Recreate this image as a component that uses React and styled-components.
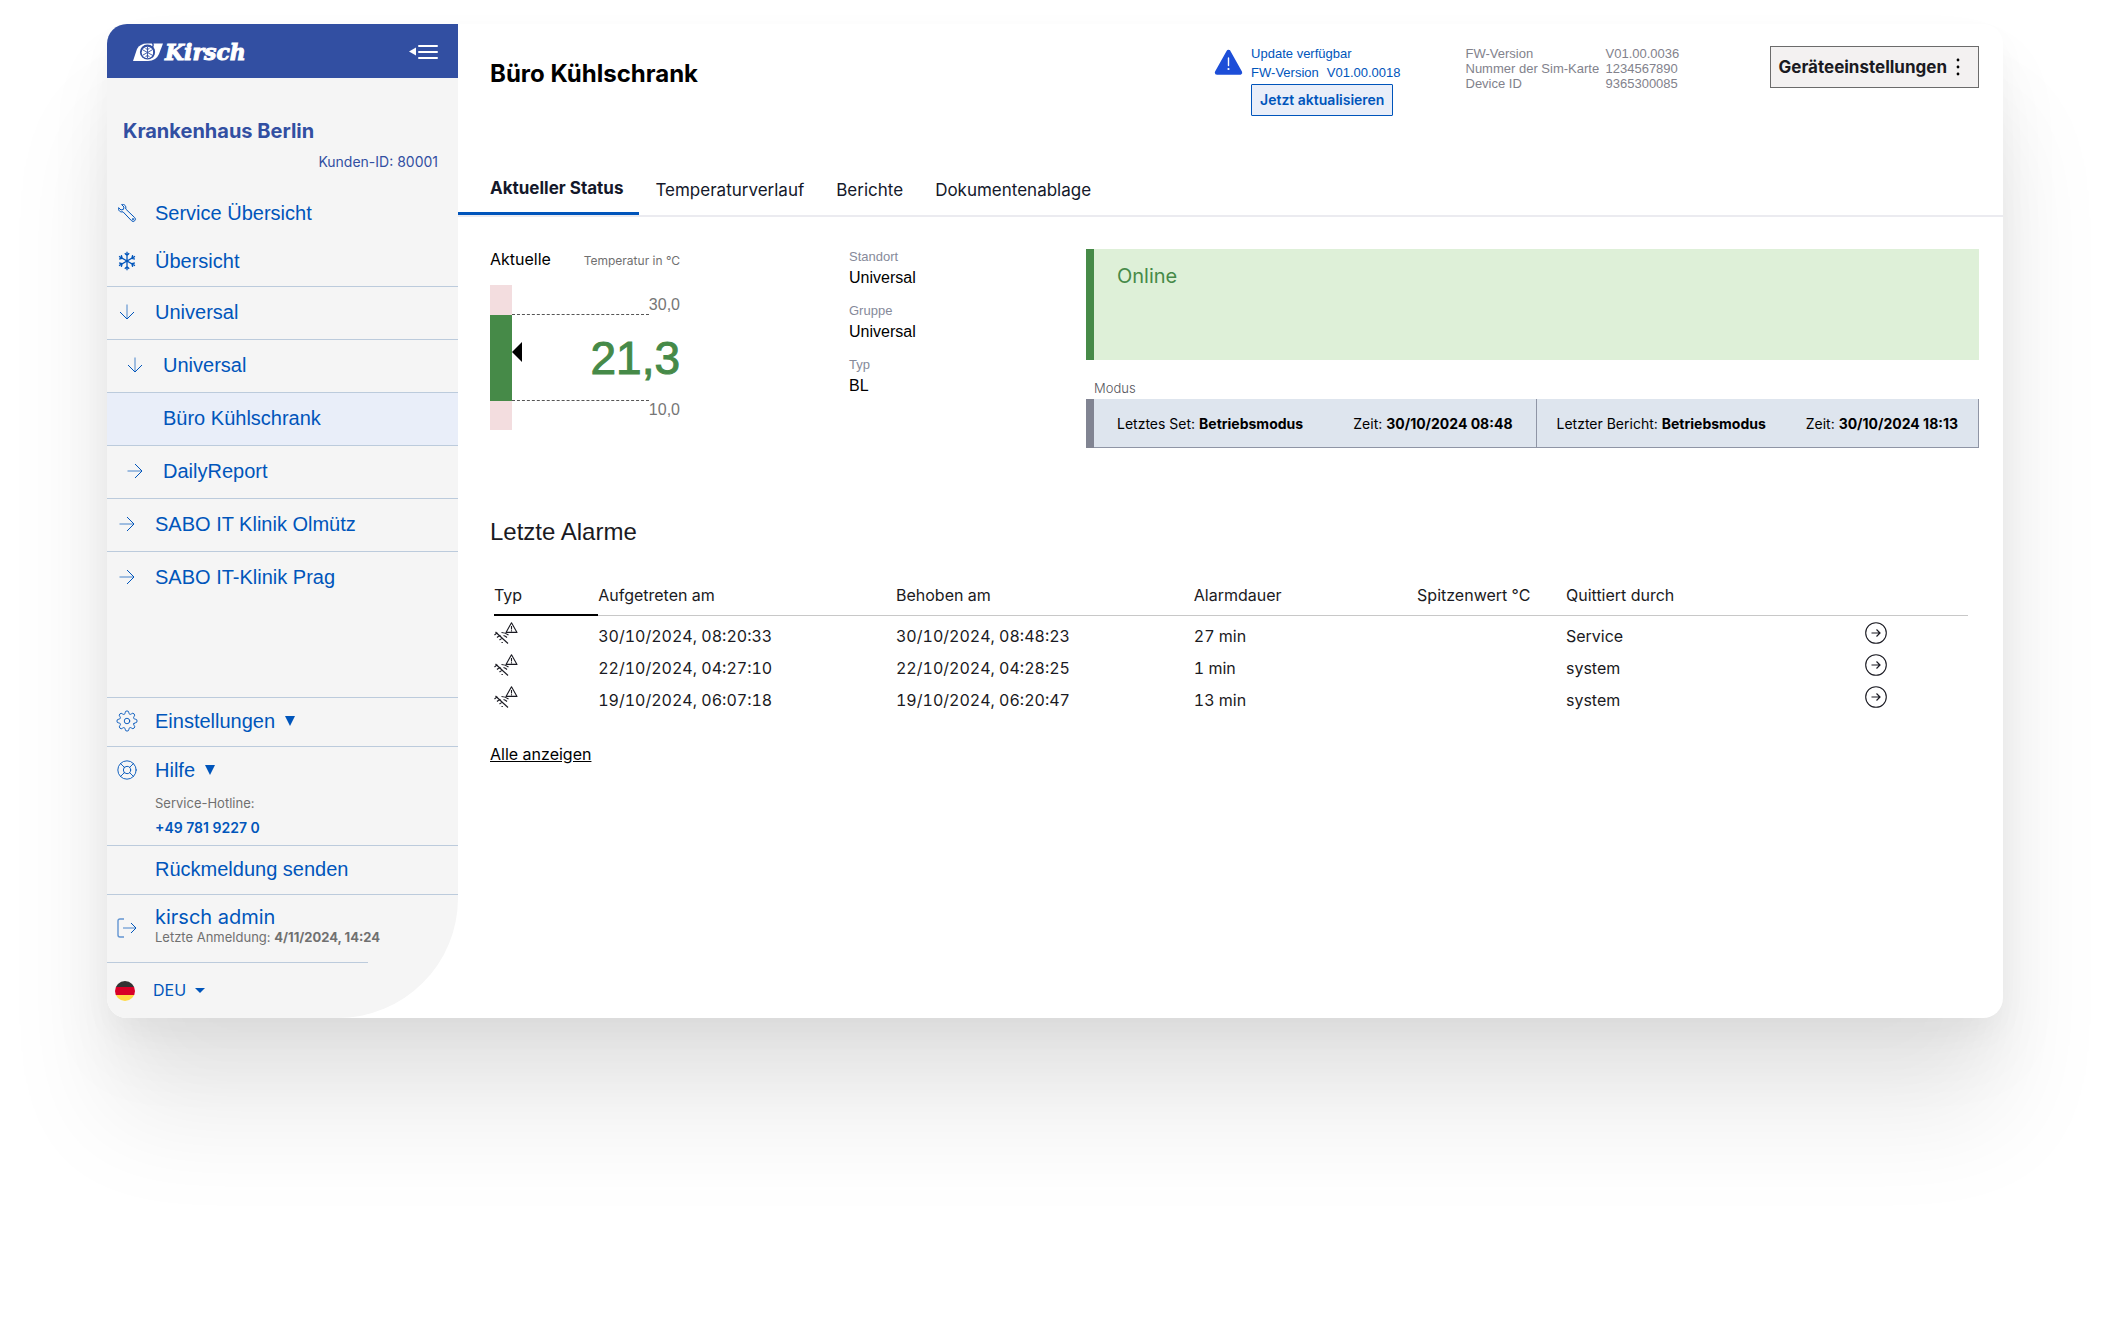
import React from 'react';
import styled, { createGlobalStyle } from 'styled-components';
import { LifeBuoy } from 'lucide-react';
import { FiSettings } from 'react-icons/fi';

const GlobalStyle = createGlobalStyle`
  *,
  *::before,
  *::after {
    box-sizing: border-box;
  }

  body {
    margin: 0;
    background-color: #FFFFFF;
    font-family: 'Inter', sans-serif;
    color: #1A1A22;
  }

  button,
  select {
    font: inherit;
    color: inherit;
    cursor: pointer;
  }
`;

const helvetica = `'Liberation Sans', Arial, sans-serif`;

const Page = styled.div`
  padding: 24px 107px 306px;
`;

const Window = styled.div`
  display: flex;
  background-color: #FFFFFF;
  border-radius: 20px;
  overflow: hidden;
  box-shadow:
    0 100px 110px rgba(0, 0, 0, 0.08),
    0 40px 70px rgba(0, 0, 0, 0.05),
    0 14px 30px rgba(0, 0, 0, 0.03);
`;

/* Sidebar */

const Sidebar = styled.aside`
  flex: 0 0 351px;
  background-color: #F5F5F5;
  border-bottom-right-radius: 120px;
  color: #0055BB;
`;

const SidebarHeader = styled.div`
  display: flex;
  align-items: center;
  justify-content: space-between;
  height: 54px;
  padding: 2px 20px 0 26px;
  background-color: #324FA2;
  color: #FFFFFF;
`;

const Logo = styled.a`
  display: flex;
  align-items: center;
  color: #FFFFFF;
  text-decoration: none;
`;

const LogoText = styled.span`
  font-family: 'DejaVu Serif', serif;
  font-size: 22px;
  line-height: 24px;
  font-weight: 700;
  font-style: italic;
  -webkit-text-stroke: 1px #FFFFFF;
`;

const IconButton = styled.button`
  display: flex;
  padding: 0;
  border: none;
  background: none;
`;

const Customer = styled.div`
  padding: 41px 20px 18px 16px;
  color: #324FA2;
`;

const CustomerName = styled.div`
  font-size: 20px;
  line-height: 24px;
  font-weight: 700;
`;

const CustomerId = styled.div`
  margin-top: 9px;
  font-size: 14px;
  line-height: 20px;
  text-align: right;
`;

const NavLink = styled.a`
  display: flex;
  align-items: center;
  gap: 18px;
  padding: ${props => (props.$tree ? '13px 10px 15px' : '11px 10px 13px')};
  padding-left: ${props => (props.$nested ? 18 : 10)}px;
  border-top: ${props => (props.$tree ? '1px solid #BCCBDC' : 'none')};
  background-color: ${props => (props.$active ? '#E9EEF9' : 'transparent')};
  font-family: ${helvetica};
  font-size: 20px;
  line-height: 24px;
  color: #0055BB;
  text-decoration: none;
`;

const IconSlot = styled.span`
  display: flex;
  justify-content: center;
  flex: 0 0 20px;
  min-width: 0;

  svg {
    flex-shrink: 0;
  }
`;

const SidebarFooter = styled.div`
  margin-top: 93px;
`;

const FooterBlock = styled.div`
  border-top: 1px solid #BCCBDC;
`;

const FooterButton = styled.button`
  display: flex;
  align-items: center;
  gap: 18px;
  width: 100%;
  padding: ${props => (props.$tight ? '11px 10px' : '11px 10px 13px')};
  border: none;
  background: none;
  font-family: ${helvetica};
  font-size: 20px;
  line-height: 24px;
  text-align: left;
`;

const ButtonLabel = styled.span`
  display: flex;
  align-items: center;
  gap: 10px;
`;

const Hotline = styled.div`
  padding: 0 10px 7px 48px;
  font-size: 13px;
  line-height: 20px;
  color: #707070;
`;

const HotlineNumber = styled.a`
  display: block;
  margin-top: 5px;
  font-size: 14px;
  font-weight: 600;
  color: #0055BB;
  text-decoration: none;
`;

const UserBlock = styled(FooterBlock)`
  display: flex;
  align-items: center;
  gap: 18px;
  padding: 10px 10px 17px;
`;

const LogoutButton = styled(IconButton)`
  padding-top: 6px;
`;

const UserName = styled.div`
  font-size: 20px;
  line-height: 24px;
`;

const LastLogin = styled.div`
  font-size: 13px;
  line-height: 16px;
  color: #707070;
`;

const LanguageBlock = styled(FooterBlock)`
  display: flex;
  align-items: center;
  width: 261px;
  height: 56px;
  padding: 0 8px;
`;

const LanguageSelect = styled.select`
  margin: 0 8px 0 18px;
  padding: 0 0 2px;
  border: none;
  background: none;
  appearance: none;
  font-size: 16px;
  line-height: 24px;
`;

/* Main */

const Main = styled.main`
  flex: 1;
  min-width: 0;
`;

const DeviceHeader = styled.header`
  display: flex;
  align-items: flex-start;
  min-height: 152px;
  padding: 20px 24px 0 32px;
`;

const DeviceTitle = styled.h1`
  flex: 1;
  margin: 14px 0 0;
  font-size: 24px;
  line-height: 32px;
  font-weight: 700;
  color: #000000;
`;

const UpdateNotice = styled.div`
  display: flex;
  gap: 8px;
  font-family: ${helvetica};
  font-size: 13px;
  line-height: 19px;
  color: #0055BB;

  svg {
    margin-top: 5px;
  }
`;

const UpdateVersion = styled.div`
  display: flex;
  gap: 8px;
`;

const UpdateButton = styled.button`
  margin-top: 2px;
  padding: 5px 8px;
  border: 1px solid #0055BB;
  border-radius: 1px;
  background-color: #E9EEF9;
  font-family: 'Inter', sans-serif;
  font-size: 14px;
  line-height: 20px;
  font-weight: 600;
`;

const DeviceInfo = styled.dl`
  display: grid;
  grid-template-columns: 140px 72px;
  margin: 2px 0 0 65px;
  font-family: ${helvetica};
  font-size: 13px;
  line-height: 15px;
  color: #82828C;

  dd {
    margin: 0;
  }
`;

const SettingsButton = styled.button`
  display: flex;
  align-items: center;
  gap: 7px;
  margin: 2px 0 0 92px;
  padding: 8px 16px 8px 8px;
  border: 1px solid #6B6B6B;
  background-color: #F3F1F1;
  font-size: 17px;
  line-height: 24px;
  font-weight: 700;
  white-space: nowrap;
`;

const Tabs = styled.nav`
  display: flex;
  align-items: flex-end;
  border-bottom: 2px solid #EBEBF0;
`;

const Tab = styled.a`
  padding: ${props => (props.$active ? '0 16px 12px 32px' : '0 16px 13px')};
  border-bottom: ${props => (props.$active ? '3px solid #0055BB' : 'none')};
  font-size: 17px;
  line-height: 24px;
  font-weight: ${props => (props.$active ? 700 : 400)};
  color: #14182A;
  text-decoration: none;
`;

const Status = styled.section`
  display: grid;
  grid-template-columns: 359px 237px 1fr;
  padding: 30px 24px 0 32px;
`;

const Temperature = styled.div`
  width: 190px;
`;

const TemperatureHead = styled.div`
  display: flex;
  align-items: baseline;
  justify-content: space-between;
  font-size: 16px;
  line-height: 24px;
  color: #000000;
`;

const Unit = styled.span`
  font-size: 12px;
  color: #707070;
`;

const Gauge = styled.div`
  position: relative;
  display: flex;
  margin-top: 12px;
`;

const GaugeBar = styled.div`
  flex: 0 0 22px;
  height: 145px;
  padding: 30px 0 29px;
  background-color: #F3DDDF;

  &::before {
    content: '';
    display: block;
    height: 86px;
    background-color: #468A48;
  }
`;

const Pointer = styled.svg`
  position: absolute;
  left: 22px;
  transform: translateY(-50%);
`;

const Scale = styled.div`
  flex: 1;
  display: grid;
  grid-template-rows: 30px 85px 30px;
`;

const Limit = styled.div`
  display: flex;
  align-items: ${props => (props.$upper ? 'flex-end' : 'flex-start')};
  font-family: ${helvetica};
  font-size: 16px;
  line-height: 20px;
  color: #767676;

  &::before {
    content: '';
    flex: 1;
    border-top: 1px dashed #555555;
  }
`;

const Reading = styled.div`
  align-self: center;
  font-family: ${helvetica};
  font-size: 46px;
  line-height: 56px;
  text-align: right;
  color: #468A48;
  -webkit-text-stroke: 1px #468A48;
`;

const Facts = styled.dl`
  margin: 1px 0 0;
  font-family: ${helvetica};

  dt {
    font-size: 13px;
    line-height: 18px;
    color: #868A9A;
  }

  dd {
    margin: 0 0 12px;
    font-size: 16px;
    line-height: 24px;
    color: #000000;
  }
`;

const StatePanel = styled.div`
  height: 111px;
  margin-top: 2px;
  padding: 15px 23px;
  border-left: 8px solid #468A48;
  background-color: #DEF0D8;
  font-size: 20px;
  line-height: 24px;
  color: #468A48;
`;

const ModeLabel = styled.div`
  margin: 19px 0 2px 8px;
  font-size: 13px;
  line-height: 18px;
  font-weight: 300;
  color: #55555C;
`;

const ModePanel = styled.div`
  display: flex;
  border-left: 8px solid #818492;
  background-color: #DEE5EE;
`;

const ModeCell = styled.div`
  flex: 1 1 50%;
  display: flex;
  flex-wrap: wrap;
  justify-content: space-between;
  padding: 15px ${props => (props.$first ? 23 : 20)}px 13px;
  border: solid #8F95A5;
  border-width: 0 1px 1px 0;
  font-size: 14px;
  line-height: 20px;
  color: #000000;
`;

const Alarms = styled.section`
  padding: 68px 24px 0 32px;
`;

const AlarmsTitle = styled.h2`
  margin: 0 0 35px;
  font-family: ${helvetica};
  font-size: 24px;
  line-height: 32px;
  font-weight: 400;
`;

const TableWrap = styled.div`
  padding: 0 11px 0 4px;
`;

const Table = styled.table`
  width: 100%;
  table-layout: fixed;
  border-spacing: 0;
  font-size: 16px;
  line-height: 24px;
  font-variant-numeric: tabular-nums;
  text-align: left;
`;

const HeadCell = styled.th`
  width: ${props => props.$width}%;
  padding: 0 0 7px;
  border-bottom: ${props => (props.$sorted ? '2px solid #000000' : '1px solid #C8C8C8')};
  font-weight: 400;
  vertical-align: top;
  white-space: nowrap;
`;

const Cell = styled.td`
  padding: 8px 0 0;
`;

const IconCell = styled.td`
  padding: 6px 0 4px;

  svg {
    display: block;
  }
`;

const ShowAll = styled.a`
  display: inline-block;
  margin-top: 30px;
  font-size: 16px;
  line-height: 24px;
  color: #000000;
`;

/* Icons */

const LogoMark = () => (
  <svg width="32" height="20" viewBox="0 0 32 20" aria-hidden="true">
    <path d="M0 19 L4 7 Q7 1.5 14 1.5 H30 L26 12 Q23 19 15 19 Z" fill="#FFFFFF" />
    <circle cx="14.5" cy="10" r="7.6" fill="#324FA2" />
    <circle cx="14.5" cy="10.5" r="5.8" fill="#FFFFFF" />
    <path
      d="M14.5 5 V16 M9.7 7.8 L19.3 13.2 M9.7 13.2 L19.3 7.8 M12.6 6 L14.5 8 L16.4 6 M12.6 15 L14.5 13 L16.4 15"
      stroke="#324FA2"
      strokeWidth="0.9"
      fill="none"
    />
    <path d="M19 0 Q21 3 19.5 5 Q22.5 9 19.5 15" stroke="#324FA2" strokeWidth="1.4" fill="none" />
  </svg>
);

const CollapseIcon = () => (
  <svg width="29" height="16" viewBox="0 0 29 16" fill="currentColor">
    <path d="M0 7.5 L7 3.5 V11.5 Z" />
    <path d="M10 2 H28 M10 8 H28 M10 14 H28" stroke="currentColor" strokeWidth="2" strokeLinecap="round" />
  </svg>
);

const WrenchIcon = () => (
  <svg width="20" height="20" viewBox="0 0 20 20" fill="none" stroke="currentColor" strokeLinejoin="round">
    <path d="M4.6 1.6 C7.6 .9 9.4 3 8.7 6 L17.7 14.6 A2.2 2.2 0 0 1 14.6 17.8 L6 8.8 C3.2 9.5 1 7.6 1.6 4.7 L4 7 L6.4 6.4 L7 4 Z" />
    <circle cx="16" cy="16.2" r=".7" />
  </svg>
);

const SnowflakeIcon = () => (
  <svg width="20" height="20" viewBox="0 0 20 20" fill="none" stroke="currentColor" strokeWidth="1.3">
    {[0, 60, 120, 180, 240, 300].map(angle => (
      <path key={angle} d="M10 10 V.8 M7.8 2.2 L10 4.4 L12.2 2.2" transform={`rotate(${angle} 10 10)`} />
    ))}
    <circle cx="10" cy="10" r="1.3" fill="currentColor" stroke="none" />
  </svg>
);

const ArrowIcon = ({ down }) => (
  <svg width="16" height="16" viewBox="0 0 16 16" fill="none" stroke="currentColor">
    <g transform={down ? 'rotate(90 8 8)' : undefined}>
      <path d="M.5 8 H15" opacity=".7" />
      <path d="M8 1 L15 8 L8 15" />
    </g>
  </svg>
);

const LogoutIcon = () => (
  <svg width="20" height="20" viewBox="0 0 20 20" fill="none" stroke="currentColor">
    <path d="M7 1 H3 Q1 1 1 3 V17 Q1 19 3 19 H7" opacity=".6" strokeWidth="1.4" />
    <path d="M6 10 H19" opacity=".7" />
    <path d="M14 5 L19 10 L14 15" />
  </svg>
);

const GearIcon = () => <FiSettings size={22} strokeWidth={1} />;

const TriangleDown = () => (
  <svg width="10" height="10" viewBox="0 0 10 10" fill="currentColor">
    <path d="M0 0 H10 L5 10 Z" />
  </svg>
);

const CaretIcon = () => (
  <svg width="10" height="5" viewBox="0 0 10 5" fill="currentColor">
    <path d="M0 0 H10 L5 5 Z" />
  </svg>
);

const GermanFlag = () => (
  <svg width="20" height="20" viewBox="0 0 20 20">
    <clipPath id="flag-circle">
      <circle cx="10" cy="10" r="10" />
    </clipPath>
    <g clipPath="url(#flag-circle)">
      <rect width="20" height="6" fill="#333333" />
      <rect y="6" width="20" height="8" fill="#D80027" />
      <rect y="14" width="20" height="6" fill="#FFDA44" />
    </g>
  </svg>
);

const WarningIcon = () => (
  <svg width="29" height="26" viewBox="0 0 29 26">
    <path
      d="M14.5 3 L26 23.5 H3 Z"
      fill="#1D4ED8"
      stroke="#1D4ED8"
      strokeWidth="4.4"
      strokeLinejoin="round"
    />
    <path d="M14.5 9 V16.5" stroke="#FFFFFF" strokeWidth="1.4" strokeLinecap="round" />
    <circle cx="14.5" cy="20" r="1.1" fill="#FFFFFF" />
  </svg>
);

const DotsIcon = () => (
  <svg width="8" height="18" viewBox="0 0 8 18" fill="#000000">
    <circle cx="4" cy="2" r="1.4" />
    <circle cx="4" cy="9" r="1.4" />
    <circle cx="4" cy="16" r="1.4" />
  </svg>
);

const ConnectionLostIcon = () => (
  <svg width="24" height="22" viewBox="0 0 24 22" fill="none" stroke="#1A1A22" strokeWidth="1.1">
    <path d="M17.5 .8 L23 10.4 H12 Z" strokeLinejoin="round" />
    <path d="M17.5 4 V7.4 M17.5 8.2 V9.4" />
    <path d="M1.5 10 L14 21.5" />
    <path d="M.5 13 Q2 11.5 3.5 11 M3 15.5 Q4.5 14 6.5 13.5 M5.5 18 Q7 16.5 9 16.5 M7.5 10.5 Q11 10.5 14.5 13 M9.5 13.5 Q11.5 14 13 15.5" />
    <path d="M7.5 20.5 H8.8" />
  </svg>
);

const CircleArrowIcon = () => (
  <svg width="24" height="22" viewBox="0 0 24 22" fill="none" stroke="#1A1A22">
    <circle cx="12" cy="11" r="10.3" strokeWidth="1.1" />
    <path d="M7.5 11 H16 M12.5 7.5 L16 11 L12.5 14.5" strokeWidth="1.2" />
  </svg>
);

const navItems = [
  { label: 'Service Übersicht', icon: <WrenchIcon /> },
  { label: 'Übersicht', icon: <SnowflakeIcon /> },
  { label: 'Universal', icon: <ArrowIcon down />, tree: true },
  { label: 'Universal', icon: <ArrowIcon down />, tree: true, nested: true },
  { label: 'Büro Kühlschrank', tree: true, nested: true, active: true },
  { label: 'DailyReport', icon: <ArrowIcon />, tree: true, nested: true },
  { label: 'SABO IT Klinik Olmütz', icon: <ArrowIcon />, tree: true },
  { label: 'SABO IT-Klinik Prag', icon: <ArrowIcon />, tree: true },
];

const tabs = ['Aktueller Status', 'Temperaturverlauf', 'Berichte', 'Dokumentenablage'];

const columns = [
  { label: 'Typ', width: 7 },
  { label: 'Aufgetreten am', width: 20 },
  { label: 'Behoben am', width: 20 },
  { label: 'Alarmdauer', width: 15 },
  { label: 'Spitzenwert °C', width: 10 },
  { label: 'Quittiert durch', width: 20 },
  { label: '', width: 7 },
];

const alarms = [
  { start: '30/10/2024, 08:20:33', end: '30/10/2024, 08:48:23', duration: '27 min', by: 'Service' },
  { start: '22/10/2024, 04:27:10', end: '22/10/2024, 04:28:25', duration: '1 min', by: 'system' },
  { start: '19/10/2024, 06:07:18', end: '19/10/2024, 06:20:47', duration: '13 min', by: 'system' },
];

const temperature = { value: 21.3, min: 10, max: 30 };

const formatTemperature = value => value.toFixed(1).replace('.', ',');

const pointerTop = ({ value, min, max }) => Math.round(30 + ((max - value) / (max - min)) * 86);

const AppSidebar = () => (
  <Sidebar>
    <SidebarHeader>
      <Logo href="#">
        <LogoMark />
        <LogoText>Kirsch</LogoText>
      </Logo>
      <IconButton type="button" aria-label="Menü einklappen">
        <CollapseIcon />
      </IconButton>
    </SidebarHeader>

    <Customer>
      <CustomerName>Krankenhaus Berlin</CustomerName>
      <CustomerId>Kunden-ID: 80001</CustomerId>
    </Customer>

    <nav>
      {navItems.map((item, index) => (
        <NavLink key={index} href="#" $tree={item.tree} $nested={item.nested} $active={item.active}>
          <IconSlot>{item.icon}</IconSlot>
          {item.label}
        </NavLink>
      ))}
    </nav>

    <SidebarFooter>
      <FooterBlock>
        <FooterButton type="button">
          <IconSlot><GearIcon /></IconSlot>
          <ButtonLabel>Einstellungen <TriangleDown /></ButtonLabel>
        </FooterButton>
      </FooterBlock>
      <FooterBlock>
        <FooterButton type="button" $tight>
          <IconSlot><LifeBuoy size={22} strokeWidth={1} /></IconSlot>
          <ButtonLabel>Hilfe <TriangleDown /></ButtonLabel>
        </FooterButton>
        <Hotline>
          Service-Hotline:
          <HotlineNumber href="tel:+4978192270">+49 781 9227 0</HotlineNumber>
        </Hotline>
      </FooterBlock>
      <FooterBlock>
        <FooterButton type="button">
          <IconSlot />
          Rückmeldung senden
        </FooterButton>
      </FooterBlock>
      <UserBlock>
        <LogoutButton type="button" aria-label="Abmelden">
          <LogoutIcon />
        </LogoutButton>
        <div>
          <UserName>kirsch admin</UserName>
          <LastLogin>Letzte Anmeldung: <b>4/11/2024, 14:24</b></LastLogin>
        </div>
      </UserBlock>
      <LanguageBlock>
        <GermanFlag />
        <LanguageSelect aria-label="Sprache" defaultValue="DEU">
          <option>DEU</option>
        </LanguageSelect>
        <CaretIcon />
      </LanguageBlock>
    </SidebarFooter>
  </Sidebar>
);

const App = () => {
  return (
    <Page>
      <GlobalStyle />
      <Window>
        <AppSidebar />
        <Main>
          <DeviceHeader>
            <DeviceTitle>Büro Kühlschrank</DeviceTitle>
            <UpdateNotice>
              <WarningIcon />
              <div>
                <div>Update verfügbar</div>
                <UpdateVersion>
                  <span>FW-Version</span>
                  <span>V01.00.0018</span>
                </UpdateVersion>
                <UpdateButton type="button">Jetzt aktualisieren</UpdateButton>
              </div>
            </UpdateNotice>
            <DeviceInfo>
              <dt>FW-Version</dt>
              <dd>V01.00.0036</dd>
              <dt>Nummer der Sim-Karte</dt>
              <dd>1234567890</dd>
              <dt>Device ID</dt>
              <dd>9365300085</dd>
            </DeviceInfo>
            <SettingsButton type="button">
              Geräteeinstellungen
              <DotsIcon />
            </SettingsButton>
          </DeviceHeader>

          <Tabs>
            {tabs.map((tab, index) => (
              <Tab key={tab} href="#" $active={index === 0}>{tab}</Tab>
            ))}
          </Tabs>

          <Status>
            <Temperature>
              <TemperatureHead>
                Aktuelle
                <Unit>Temperatur in °C</Unit>
              </TemperatureHead>
              <Gauge>
                <GaugeBar />
                <Pointer width="10" height="20" viewBox="0 0 10 20" style={{ top: pointerTop(temperature) }}>
                  <path d="M0 10 L10 0 V20 Z" />
                </Pointer>
                <Scale>
                  <Limit $upper>{formatTemperature(temperature.max)}</Limit>
                  <Reading>{formatTemperature(temperature.value)}</Reading>
                  <Limit>{formatTemperature(temperature.min)}</Limit>
                </Scale>
              </Gauge>
            </Temperature>

            <Facts>
              <dt>Standort</dt>
              <dd>Universal</dd>
              <dt>Gruppe</dt>
              <dd>Universal</dd>
              <dt>Typ</dt>
              <dd>BL</dd>
            </Facts>

            <div>
              <StatePanel>Online</StatePanel>
              <ModeLabel>Modus</ModeLabel>
              <ModePanel>
                <ModeCell $first>
                  <span>Letztes Set: <b>Betriebsmodus</b></span>
                  <span>Zeit: <b>30/10/2024 08:48</b></span>
                </ModeCell>
                <ModeCell>
                  <span>Letzter Bericht: <b>Betriebsmodus</b></span>
                  <span>Zeit: <b>30/10/2024 18:13</b></span>
                </ModeCell>
              </ModePanel>
            </div>
          </Status>

          <Alarms>
            <AlarmsTitle>Letzte Alarme</AlarmsTitle>
            <TableWrap>
              <Table>
                <thead>
                  <tr>
                    {columns.map((column, index) => (
                      <HeadCell key={index} $width={column.width} $sorted={index === 0}>
                        {column.label}
                      </HeadCell>
                    ))}
                  </tr>
                </thead>
                <tbody>
                  {alarms.map(alarm => (
                    <tr key={alarm.start}>
                      <IconCell><ConnectionLostIcon /></IconCell>
                      <Cell>{alarm.start}</Cell>
                      <Cell>{alarm.end}</Cell>
                      <Cell>{alarm.duration}</Cell>
                      <Cell />
                      <Cell>{alarm.by}</Cell>
                      <IconCell>
                        <IconButton type="button" aria-label="Details">
                          <CircleArrowIcon />
                        </IconButton>
                      </IconCell>
                    </tr>
                  ))}
                </tbody>
              </Table>
            </TableWrap>
            <ShowAll href="#">Alle anzeigen</ShowAll>
          </Alarms>
        </Main>
      </Window>
    </Page>
  );
};

export default App;
